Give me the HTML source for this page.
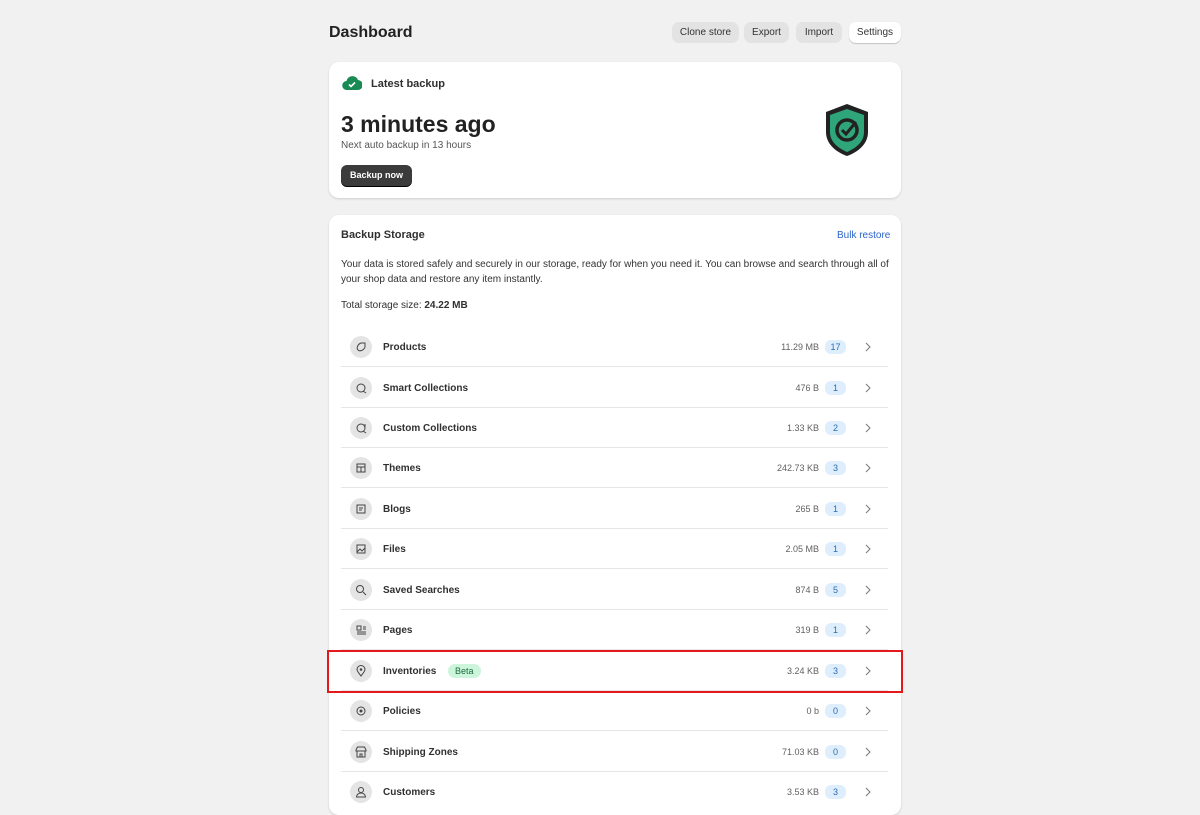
<!DOCTYPE html><html><head><style>
*{box-sizing:border-box;margin:0;padding:0}
body{width:1200px;height:800px;overflow:hidden;background:#f1f1f1;font-family:"Liberation Sans",sans-serif;color:#303030;position:relative}
.abs{position:absolute}
h1{position:absolute;left:329px;top:24px;font-size:16px;font-weight:bold;color:#222}
.btn{position:absolute;top:22px;height:21px;border-radius:7px;background:#e3e3e3;font-size:10px;line-height:21px;text-align:center;color:#333}
.card{position:absolute;left:329px;width:572px;background:#fff;border-radius:10px;box-shadow:0 1px 2px rgba(0,0,0,.15)}
.row{position:absolute;left:341px;width:547px;height:40px;border-bottom:1px solid #e6e6e6}
.ic{position:absolute;left:9px;top:9px;width:22px;height:22px;border-radius:50%;background:#e4e4e4}
.ic svg{position:absolute;left:5px;top:5px}
.nm{position:absolute;left:42px;top:15px;font-size:10px;font-weight:bold;color:#303030}
.sz{position:absolute;right:69px;top:15px;font-size:9px;color:#616161}
.bd{position:absolute;left:484px;top:13px;width:21px;height:14px;border-radius:6px;background:#dfeefc;color:#2a6db0;font-size:9px;line-height:14px;text-align:center}
.ch{position:absolute;left:523px;top:15px}
</style></head><body>
<h1>Dashboard</h1>
<div class="btn" style="left:672px;width:67px">Clone store</div>
<div class="btn" style="left:744px;width:45px">Export</div>
<div class="btn" style="left:796px;width:46px">Import</div>
<div class="btn" style="left:849px;width:52px;background:#fff;box-shadow:0 1px 1px rgba(0,0,0,.2)">Settings</div>

<div class="card" style="top:62px;height:136px">
<svg class="abs" style="left:13px;top:13px" width="20" height="16" viewBox="0 0 20 16"><path d="M5 15a4.5 4.5 0 0 1-.5-9A6 6 0 0 1 16 5a4.5 4.5 0 0 1-.5 10z" fill="#1a8a55"/><path d="M7 9.5l2 2 4-4" stroke="#fff" stroke-width="1.6" fill="none"/></svg>
<div class="abs" style="left:42px;top:16px;font-size:11px;font-weight:bold">Latest backup</div>
<div class="abs" style="left:12px;top:49px;font-size:23px;font-weight:bold;color:#222">3 minutes ago</div>
<div class="abs" style="left:12px;top:78px;font-size:10px;color:#555">Next auto backup in 13 hours</div>
<div class="abs" style="left:12px;top:103px;width:71px;height:21px;border-radius:6px;background:#3b3b3b;color:#fff;font-size:9px;font-weight:bold;line-height:21px;text-align:center;box-shadow:0 1px 0 #000">Backup now</div>
<svg class="abs" style="left:494px;top:40px" width="48" height="56" viewBox="0 0 48 56"><path d="M24 2L45 10V30C45 42 35 50 24 54C13 50 3 42 3 30V10Z" fill="#222"/><path d="M24 7L41 13V30C41 40 33 46 24 50C15 46 7 40 7 30V13Z" fill="#2fa57a"/><circle cx="24" cy="28" r="10" fill="none" stroke="#222" stroke-width="3.5"/><path d="M19 28l4 4 10-12" stroke="#222" stroke-width="3" fill="none"/></svg>
</div>

<div class="card" style="top:215px;height:600px">
<div class="abs" style="left:12px;top:14px;font-size:11px;font-weight:bold">Backup Storage</div>
<div class="abs" style="left:508px;top:15px;font-size:10px;color:#2a63c7">Bulk restore</div>
<div class="abs" style="left:12px;top:42px;width:550px;font-size:10px;line-height:15px;color:#333">Your data is stored safely and securely in our storage, ready for when you need it. You can browse and search through all of your shop data and restore any item instantly.</div>
<div class="abs" style="left:12px;top:85px;font-size:10px">Total storage size: <b>24.22 MB</b></div>
</div>

<div class="row" style="top:327px"><div class="ic"><svg width="12" height="12"><path d="M3 9C1 7 3 3 6 2l4 0 0 4C9 9 5 11 3 9z" stroke="#444" fill="none"/></svg></div><div class="nm">Products</div><div class="sz">11.29 MB</div><div class="bd">17</div><svg class="ch" width="8" height="10"><path d="M2 1l4 4-4 4" stroke="#777" fill="none"/></svg></div>
<div class="row" style="top:368px"><div class="ic"><svg width="12" height="12"><circle cx="6" cy="6" r="4" stroke="#444" fill="none"/><path d="M8 9l3 2" stroke="#444"/></svg></div><div class="nm">Smart Collections</div><div class="sz">476 B</div><div class="bd">1</div><svg class="ch" width="8" height="10"><path d="M2 1l4 4-4 4" stroke="#777" fill="none"/></svg></div>
<div class="row" style="top:408px"><div class="ic"><svg width="12" height="12"><circle cx="6" cy="6" r="4" stroke="#444" fill="none"/><path d="M8 9l3 2M10 2v3" stroke="#444"/></svg></div><div class="nm">Custom Collections</div><div class="sz">1.33 KB</div><div class="bd">2</div><svg class="ch" width="8" height="10"><path d="M2 1l4 4-4 4" stroke="#777" fill="none"/></svg></div>
<div class="row" style="top:448px"><div class="ic"><svg width="12" height="12"><rect x="2" y="2" width="8" height="8" stroke="#444" fill="none"/><path d="M2 5h8M6 5v5" stroke="#444"/></svg></div><div class="nm">Themes</div><div class="sz">242.73 KB</div><div class="bd">3</div><svg class="ch" width="8" height="10"><path d="M2 1l4 4-4 4" stroke="#777" fill="none"/></svg></div>
<div class="row" style="top:489px"><div class="ic"><svg width="12" height="12"><rect x="2" y="2" width="8" height="8" stroke="#444" fill="none"/><path d="M4 5h4M4 7h3" stroke="#444"/></svg></div><div class="nm">Blogs</div><div class="sz">265 B</div><div class="bd">1</div><svg class="ch" width="8" height="10"><path d="M2 1l4 4-4 4" stroke="#777" fill="none"/></svg></div>
<div class="row" style="top:529px"><div class="ic"><svg width="12" height="12"><rect x="2" y="2" width="8" height="8" stroke="#444" fill="none"/><path d="M2 9l3-3 2 2 3-3" stroke="#444" fill="none"/></svg></div><div class="nm">Files</div><div class="sz">2.05 MB</div><div class="bd">1</div><svg class="ch" width="8" height="10"><path d="M2 1l4 4-4 4" stroke="#777" fill="none"/></svg></div>
<div class="row" style="top:570px"><div class="ic"><svg width="12" height="12"><circle cx="5" cy="5" r="3.5" stroke="#444" fill="none"/><path d="M8 8l3 3" stroke="#444"/></svg></div><div class="nm">Saved Searches</div><div class="sz">874 B</div><div class="bd">5</div><svg class="ch" width="8" height="10"><path d="M2 1l4 4-4 4" stroke="#777" fill="none"/></svg></div>
<div class="row" style="top:610px"><div class="ic"><svg width="12" height="12"><rect x="2" y="2" width="4" height="4" stroke="#444" fill="none"/><path d="M8 3h3M8 5h3M2 8h9M2 10h9" stroke="#444"/></svg></div><div class="nm">Pages</div><div class="sz">319 B</div><div class="bd">1</div><svg class="ch" width="8" height="10"><path d="M2 1l4 4-4 4" stroke="#777" fill="none"/></svg></div>
<div class="row" style="top:651px"><div class="ic"><svg width="12" height="12"><path d="M6 11C3 7 2 6 2 4.5a4 4 0 0 1 8 0C10 6 9 7 6 11z" stroke="#444" fill="none"/><circle cx="6" cy="4.5" r="1.3" fill="#444"/></svg></div><div class="nm">Inventories</div><div class="abs" style="left:107px;top:13px;height:14px;padding:0 7px;border-radius:7px;background:#cdf5dc;color:#1a6b3d;font-size:9px;line-height:14px">Beta</div><div class="sz">3.24 KB</div><div class="bd">3</div><svg class="ch" width="8" height="10"><path d="M2 1l4 4-4 4" stroke="#777" fill="none"/></svg></div>
<div class="row" style="top:691px"><div class="ic"><svg width="12" height="12"><circle cx="6" cy="6" r="4" stroke="#444" fill="none"/><circle cx="6" cy="6" r="1.5" fill="#444"/></svg></div><div class="nm">Policies</div><div class="sz">0 b</div><div class="bd">0</div><svg class="ch" width="8" height="10"><path d="M2 1l4 4-4 4" stroke="#777" fill="none"/></svg></div>
<div class="row" style="top:732px"><div class="ic"><svg width="12" height="12"><path d="M1 4l1.5-3h7L11 4v1H1zM2 5v6h8V5M5 11V8h2v3" stroke="#444" fill="none"/></svg></div><div class="nm">Shipping Zones</div><div class="sz">71.03 KB</div><div class="bd">0</div><svg class="ch" width="8" height="10"><path d="M2 1l4 4-4 4" stroke="#777" fill="none"/></svg></div>
<div class="row" style="top:772px;border:none"><div class="ic"><svg width="12" height="12"><circle cx="6" cy="4" r="2.5" stroke="#444" fill="none"/><path d="M1.5 11a4.5 4 0 0 1 9 0z" stroke="#444" fill="none"/></svg></div><div class="nm">Customers</div><div class="sz">3.53 KB</div><div class="bd">3</div><svg class="ch" width="8" height="10"><path d="M2 1l4 4-4 4" stroke="#777" fill="none"/></svg></div>

<div class="abs" style="left:327px;top:650px;width:576px;height:43px;border:2px solid #e3191c"></div>
</body></html>
